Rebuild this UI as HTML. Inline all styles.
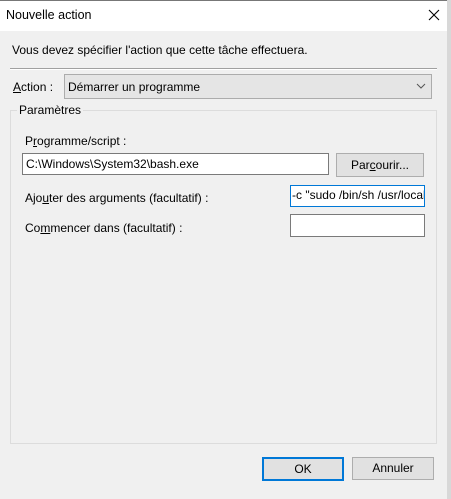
<!DOCTYPE html>
<html><head><meta charset="utf-8"><style>
body{margin:0;width:451px;height:499px;background:#f0f0f0;font-family:"Liberation Sans",sans-serif;font-size:12px;color:#000;position:relative;overflow:hidden}
.a{position:absolute;white-space:nowrap}
.title{left:0;top:0;width:447px;height:31px;background:#fff}
.inp{background:#fff;border:1px solid #7a7a7a;box-sizing:border-box;overflow:hidden;padding-left:3px;line-height:20px}
.btn{background:#e1e1e1;border:1px solid #adadad;box-sizing:border-box;text-align:center}
u{text-decoration:underline}
</style></head><body>
<div class="a title"></div>
<div class="a" style="left:0;top:0;width:447px;height:1px;background:#777"></div>
<div class="a" style="left:447px;top:0;width:4px;height:499px;background:#d8d8d8"></div>
<div class="a" style="left:6px;top:8px;font-size:12.5px">Nouvelle action</div>
<svg class="a" style="left:428px;top:9px" width="12" height="12"><path d="M1 1L11 11M11 1L1 11" stroke="#000" stroke-width="1.1"/></svg>
<div class="a" style="left:12px;top:43px">Vous devez spécifier l'action que cette tâche effectuera.</div>
<div class="a" style="left:10px;top:68px;width:427px;height:1px;background:#a0a0a0"></div>
<div class="a" style="left:10px;top:69px;width:427px;height:1px;background:#fff"></div>
<div class="a" style="left:13px;top:80px"><u>A</u>ction :</div>
<div class="a" style="left:64px;top:74px;width:368px;height:25px;background:#e5e5e5;border:1px solid #acacac;box-sizing:border-box"></div>
<div class="a" style="left:68px;top:80px">Démarrer un programme</div>
<svg class="a" style="left:416px;top:83px" width="10" height="6"><path d="M1 1L5 5L9 1" stroke="#555" fill="none"/></svg>
<div class="a" style="left:10px;top:110px;width:427px;height:334px;border:1px solid #dcdcdc;box-sizing:border-box"></div>
<div class="a" style="left:17px;top:103px;background:#f0f0f0;padding:0 2px">Paramètres</div>
<div class="a" style="left:25px;top:134px">P<u>r</u>ogramme/script :</div>
<div class="a inp" style="left:22px;top:153px;width:307px;height:22px">C:\Windows\System32\bash.exe</div>
<div class="a btn" style="left:336px;top:153px;width:88px;height:24px;line-height:22px">Par<u>c</u>ourir...</div>
<div class="a" style="left:25px;top:191px">Ajo<u>u</u>ter des arguments (facultatif) :</div>
<div class="a inp" style="left:290px;top:185px;width:135px;height:22px;border-color:#0078d7;line-height:19px;padding-left:1px">-c "sudo /bin/sh /usr/local</div>
<div class="a" style="left:25px;top:221px">Co<u>m</u>mencer dans (facultatif) :</div>
<div class="a inp" style="left:290px;top:214px;width:135px;height:23px"></div>
<div class="a btn" style="left:262px;top:457px;width:82px;height:24px;border:2px solid #0078d7;line-height:20px">OK</div>
<div class="a btn" style="left:352px;top:457px;width:82px;height:23px;line-height:21px">Annuler</div>
</body></html>
